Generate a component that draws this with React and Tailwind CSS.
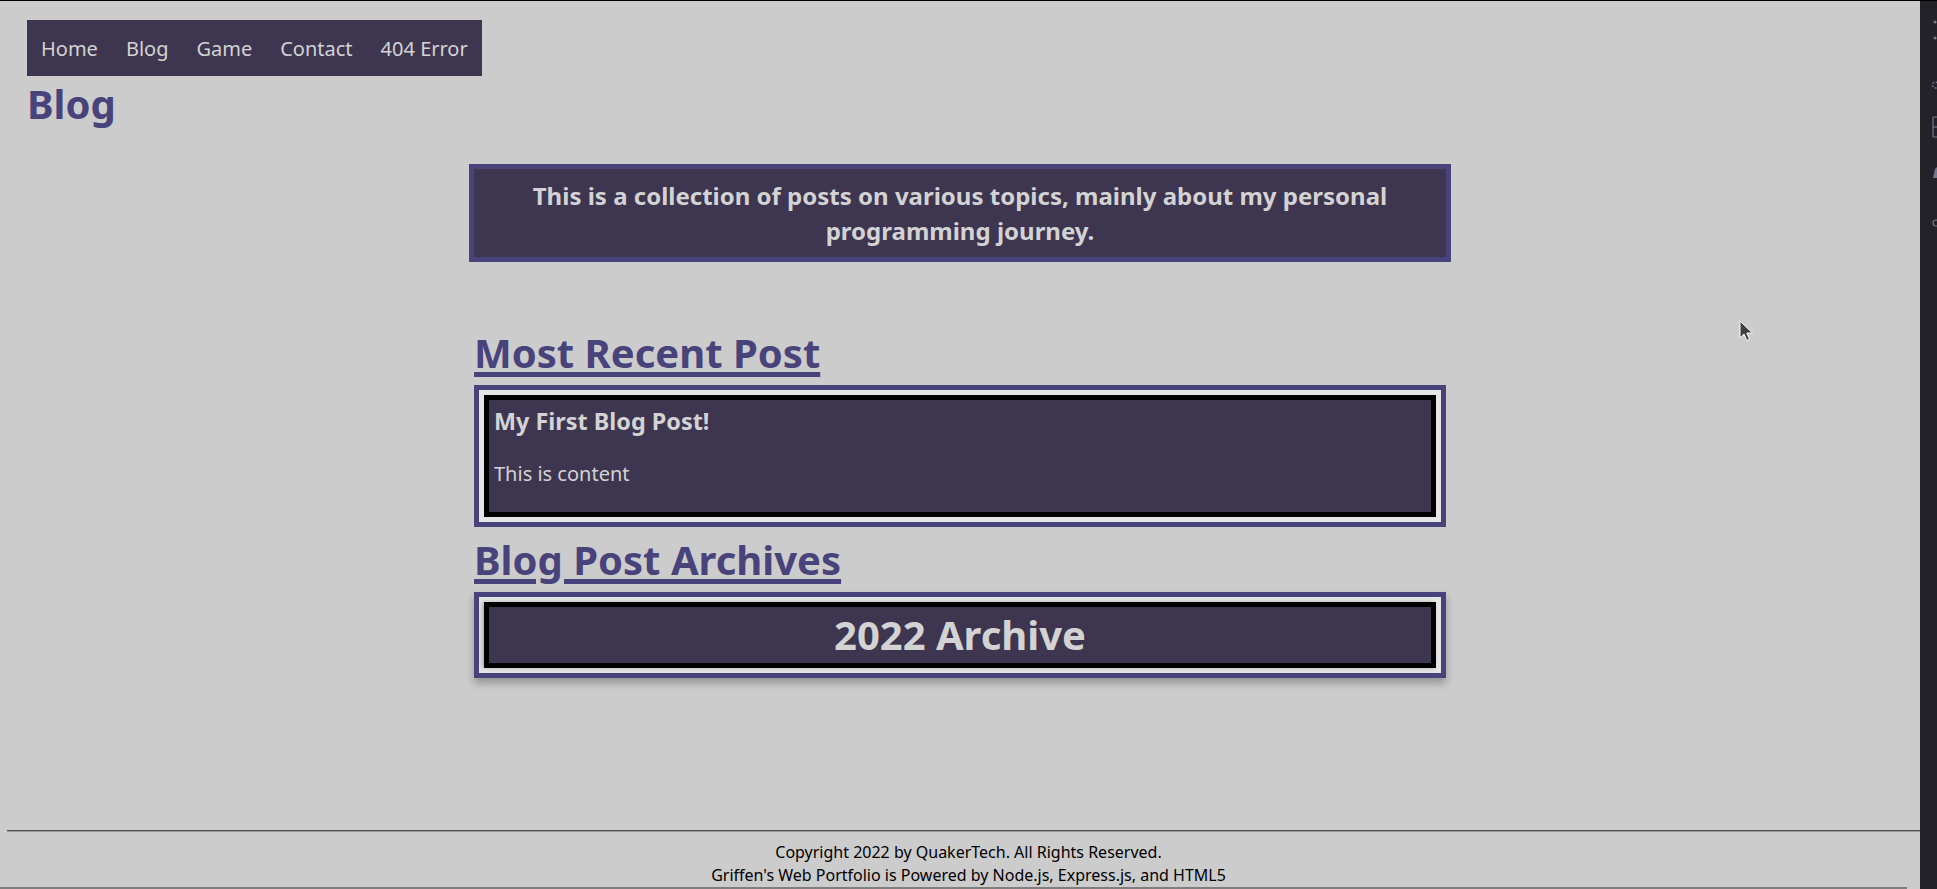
import React from "react";

const navItems = ["Home", "Blog", "Game", "Contact", "404 Error"];

function Cursor() {
  return (
    <svg
      className="absolute left-[1739px] top-[319px]"
      width="16"
      height="24"
      viewBox="0 0 16 24"
    >
      <path
        d="M1 1 L1 18 L5 14 L7.8 20.5 L10.5 19.3 L7.8 13 L13.5 13 Z"
        fill="#404040"
        stroke="#ffffff"
        strokeWidth="1"
        strokeLinejoin="round"
      />
    </svg>
  );
}

function SideStrip() {
  return (
    <div className="absolute right-0 top-0 h-full w-[17px] bg-[#232229] overflow-hidden">
      <svg width="17" height="260" viewBox="0 0 17 260" className="block">
        <circle cx="15" cy="21" r="1.6" fill="#6f7a90" />
        <circle cx="15" cy="37" r="1.6" fill="#6f7a90" />
        <circle cx="15.5" cy="84" r="3" fill="none" stroke="#6f7a90" strokeWidth="1.3" strokeDasharray="2 1.5" />
        <rect x="13" y="116" width="8" height="20" rx="1" fill="none" stroke="#6f7a90" strokeWidth="1.2" />
        <line x1="13" y1="126" x2="21" y2="126" stroke="#6f7a90" strokeWidth="1.2" />
        <path d="M13 177 L15 168 L18 165 L18 177 Z" fill="#6f7a90" />
        <circle cx="16" cy="222" r="3" fill="none" stroke="#6f7a90" strokeWidth="1.2" />
      </svg>
    </div>
  );
}

export default function App() {
  return (
    <div
      className="relative w-[1937px] h-[889px] overflow-hidden bg-[#cccccc] border-t border-black flex flex-col"
      style={{ fontFamily: '"Noto Sans", "Open Sans", sans-serif' }}
    >
      <div className="w-[1920px] pl-[27px] pt-[19px]">
        <nav className="inline-flex h-[56px] items-center bg-[#3e3650]">
          {navItems.map((item) => (
            <a
              key={item}
              href="#"
              className="px-[14px] text-[20px] leading-[27px] text-[#d3d3d3]"
            >
              {item}
            </a>
          ))}
        </nav>
        <h1 className="mt-[1px] text-[40px] font-bold leading-[54px] text-[#48437a]">
          Blog
        </h1>
      </div>

      <main className="w-[1920px] flex flex-col items-center">
        <div className="mt-[33px] w-[982px] border-[5px] border-[#48437a] bg-[#3e3650] px-[10px] py-[9px] text-center text-[24px] font-bold leading-[35px] text-[#d3d3d3]">
          This is a collection of posts on various topics, mainly about my
          personal programming journey.
        </div>

        <section className="w-[972px] mt-[63px]">
          <h2 className="text-[40px] font-bold leading-[55px] text-[#48437a]">
            <a
              href="#"
              className="underline decoration-[5px] underline-offset-[4px]"
            >
              Most Recent Post
            </a>
          </h2>
          <div className="mt-[5px] border-[5px] border-[#48437a] bg-[#e6e6e6] p-[5px]">
            <div className="border-[5px] border-black bg-[#3e3650] p-[5px] text-[#d3d3d3]">
              <h3 className="text-[23.4px] font-bold leading-[32px]">
                My First Blog Post!
              </h3>
              <p className="mt-[23px] mb-[20px] text-[20px] leading-[27px]">
                This is content
              </p>
            </div>
          </div>

          <h2 className="mt-[5px] text-[40px] font-bold leading-[55px] text-[#48437a]">
            <a
              href="#"
              className="underline decoration-[5px] underline-offset-[4px]"
            >
              Blog Post Archives
            </a>
          </h2>
          <div className="mt-[5px] border-[5px] border-[#48437a] bg-[#e6e6e6] p-[5px] shadow-[0_5px_8px_rgba(0,0,0,0.28)]">
            <div className="border-[5px] border-black bg-[#3e3650] text-center text-[#d3d3d3] shadow-[-2px_0_4px_rgba(0,0,0,0.25)]">
              <h2 className="text-[40px] font-bold leading-[56px]">
                2022 Archive
              </h2>
            </div>
          </div>
        </section>
      </main>

      <footer className="mt-auto w-full">
        <div className="ml-[7px] h-[2px] border-t border-[#4f4f4f] bg-[#9a9a9a]" />
        <div className="pt-[9px] text-center text-[16px] leading-[23px] text-black">
          <p>Copyright 2022 by QuakerTech. All Rights Reserved.</p>
          <p>Griffen's Web Portfolio is Powered by Node.js, Express.js, and HTML5</p>
        </div>
        <div className="h-[2px] w-[1907px] bg-[#7f7f7f]" />
      </footer>

      <Cursor />
      <SideStrip />
    </div>
  );
}
